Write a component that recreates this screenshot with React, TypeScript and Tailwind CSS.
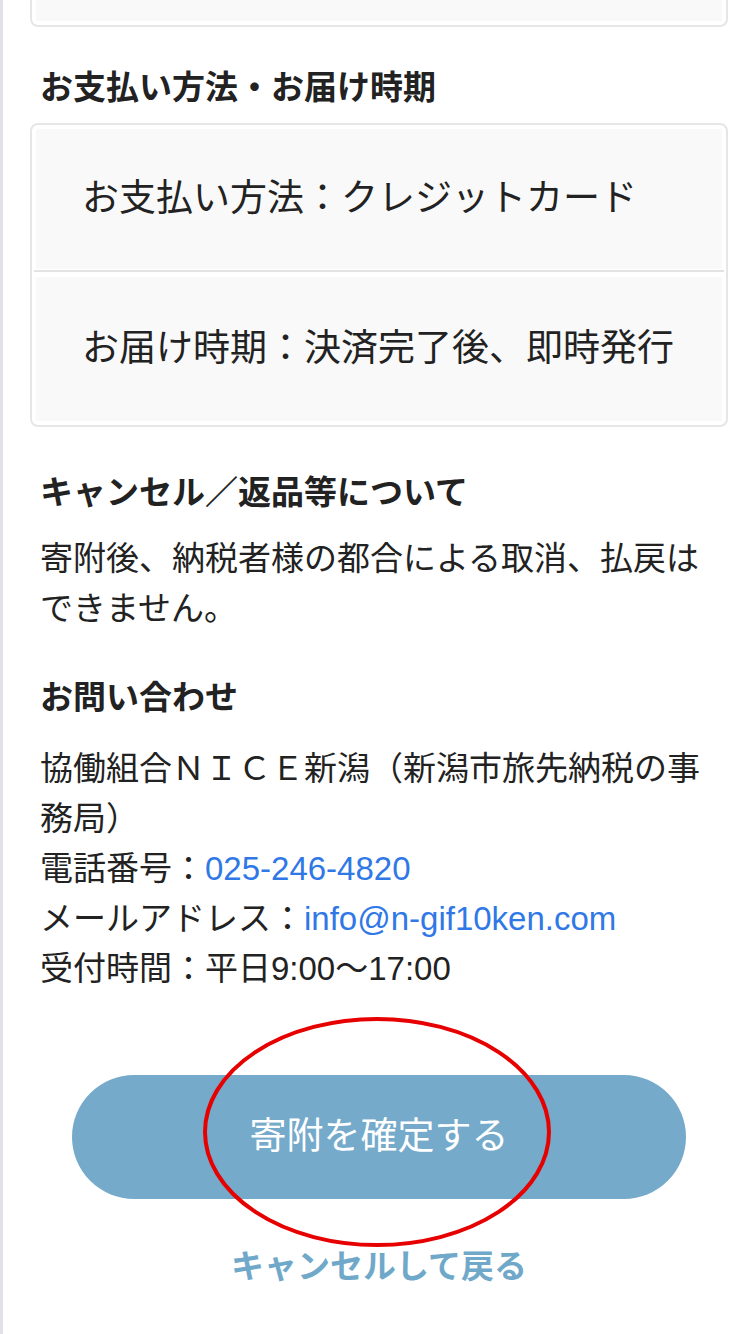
import React from 'react';

const font = { fontFamily: '"Liberation Sans", "Noto Sans CJK JP", sans-serif' };

const App = () => {
  return (
    <div
      className="relative min-h-[1334px] w-[750px] overflow-hidden border-l-[3px] border-[#e1e1ea] bg-white text-[#222]"
      style={font}
    >
      <div className="pl-[27px] pr-[22px]">
        {/* Previous box (bottom edge only) */}
        <div className="h-[27px] rounded-b-lg border-2 border-t-0 border-[#e6e6e6] px-[4px] pb-[4px]">
          <div className="h-full bg-[#f9f9f9]" />
        </div>

        {/* Payment & delivery */}
        <h2 className="mt-[36px] pl-[10px] text-[33px] font-bold leading-[50px]">
          お支払い方法・お届け時期
        </h2>
        <div className="mt-[10px] rounded-lg border-2 border-[#e6e6e6] bg-white p-[4px]">
          <div className="flex h-[140px] items-center bg-[#f9f9f9] pl-[46px] text-[37px] leading-[50px]">
            お支払い方法：クレジットカード
          </div>
          <div className="mx-[-2px] mb-[5px] mt-[1px] h-[2px] bg-[#e3e3e3]" />
          <div className="flex h-[144px] items-center bg-[#f9f9f9] pl-[46px] text-[37px] leading-[50px]">
            お届け時期：決済完了後、即時発行
          </div>
        </div>

        {/* Cancel / returns */}
        <h2 className="mt-[41px] pl-[10px] text-[33px] font-bold leading-[50px]">
          キャンセル／返品等について
        </h2>
        <p className="mt-[16px] pl-[10px] text-[33px] leading-[50px]">
          寄附後、納税者様の都合による取消、払戻はできません。
        </p>

        {/* Contact */}
        <h2 className="mt-[39px] pl-[10px] text-[33px] font-bold leading-[50px]">
          お問い合わせ
        </h2>
        <div className="mt-[21px] pl-[10px] text-[33px] leading-[50px]">
          <p>協働組合ＮＩＣＥ新潟（新潟市旅先納税の事務局）</p>
          <p>
            電話番号：<a href="#" className="text-[#2f78e6]">025-246-4820</a>
          </p>
          <p>
            メールアドレス：<a href="#" className="text-[#2f78e6]">info@n-gif10ken.com</a>
          </p>
          <p>受付時間：平日9:00〜17:00</p>
        </div>

        {/* Actions */}
        <div className="mt-[81px] flex flex-col items-center">
          <button className="flex h-[124px] w-[614px] items-center justify-center rounded-full bg-[#75aacb] text-[37px] text-white">
            寄附を確定する
          </button>
          <a href="#" className="mt-[43px] text-[33px] font-bold leading-[50px] text-[#70a8c9]">
            キャンセルして戻る
          </a>
        </div>
      </div>

      {/* Red annotation circle */}
      <svg
        className="pointer-events-none absolute left-[199px] top-[1016px]"
        width="350"
        height="232"
        viewBox="0 0 350 232"
      >
        <ellipse cx="175" cy="116" rx="172" ry="113" fill="none" stroke="#e60000" strokeWidth="4" />
      </svg>
    </div>
  );
};

export default App;
